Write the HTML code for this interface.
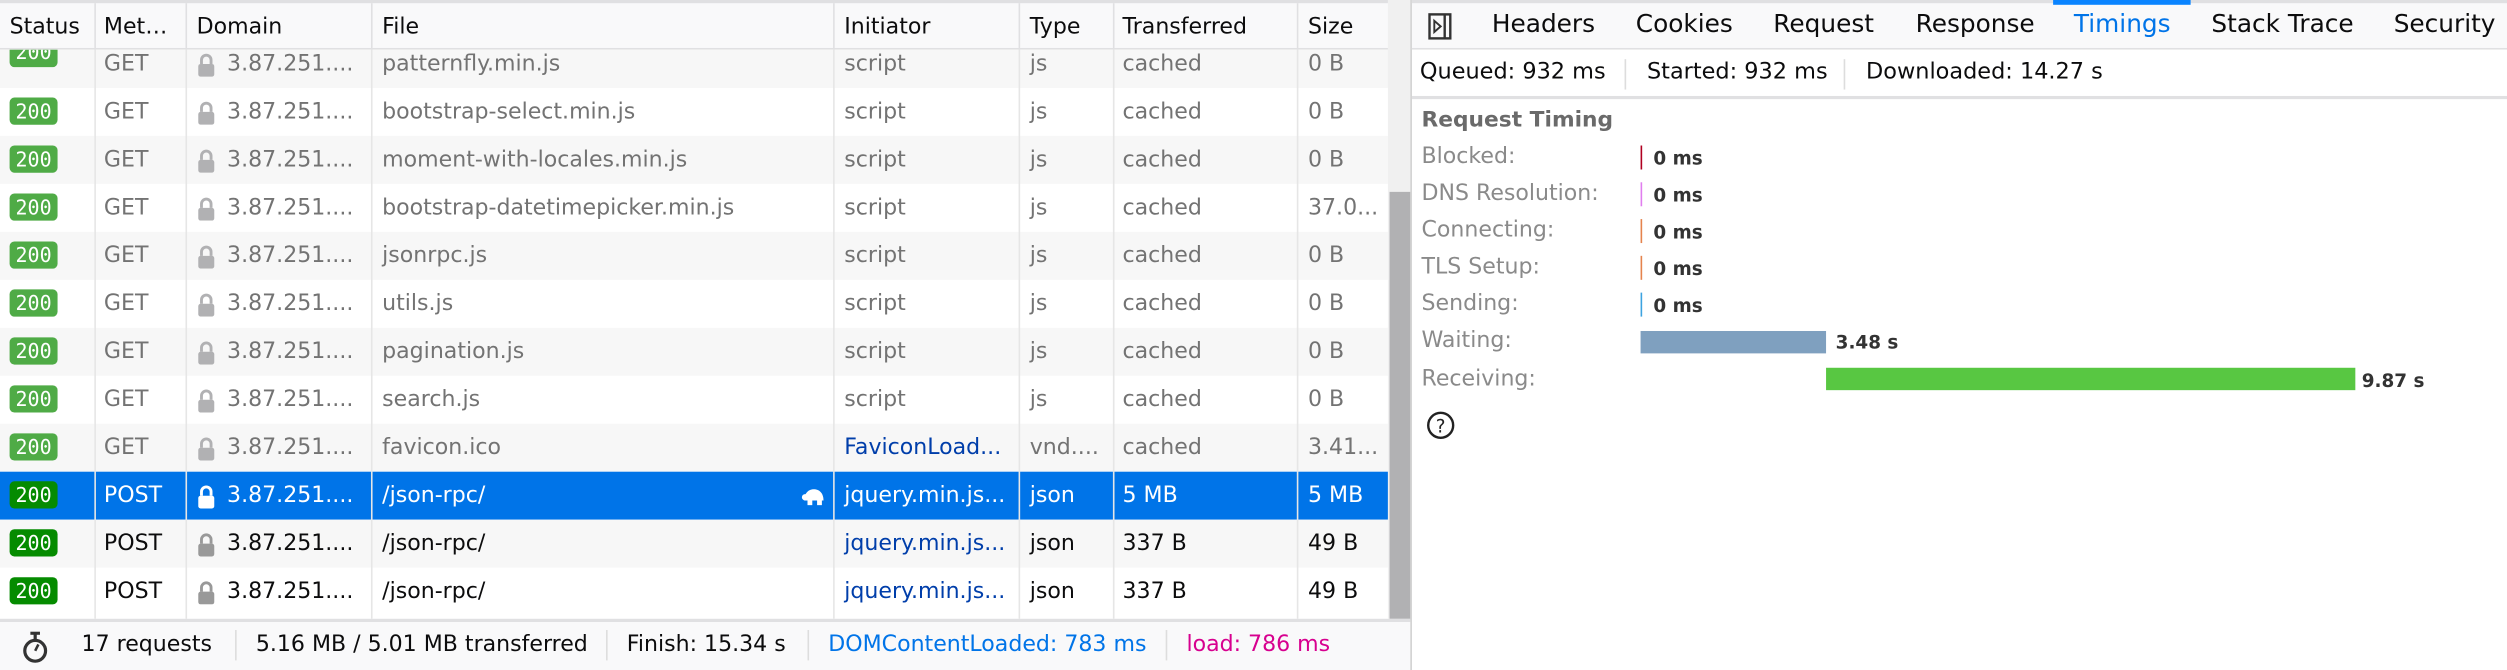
<!DOCTYPE html>
<html><head><meta charset="utf-8"><style>
html,body{margin:0;padding:0;background:#fff;overflow:hidden;width:2507px;height:670px}
#w{position:absolute;left:0;top:0;width:1568px;height:419px;transform:scale(1.599);transform-origin:0 0;font-family:"DejaVu Sans","Liberation Sans",sans-serif;font-size:11px;color:#0c0c0d}
.left{position:absolute;left:0;top:0;width:882px;height:419px;background:#fff}
.hdr{position:absolute;left:0;top:0;width:868px;height:31px;background:#f9f9fa;border-top:2px solid #e0e0e2;box-sizing:border-box;border-bottom:1px solid #e0e0e2}
.col{position:absolute;top:0;height:100%;border-left:1px solid #e0e0e2}
.ht{position:absolute;top:7px;font-size:13.8px;color:#0c0c0d;white-space:nowrap}
.row{position:absolute;left:0;width:868px;height:30px;font-size:13.8px;color:#737373}
.row.g{background:#f7f7f7}
.row.sel{background:#0074e8;color:#fff}
.row span{position:absolute;top:7px;white-space:nowrap}
.b{position:absolute;left:6px;top:6px;width:30px;height:17px;border-radius:3px;background:#4fab46;color:#fff;font-family:"DejaVu Sans Mono",monospace;font-size:12.5px;line-height:17px;text-align:center}
.b.d{background:#058b00}
.lk{position:absolute;left:123px;top:8px;width:12px;height:15px}
.vl{position:absolute;top:31px;height:356px;border-left:1px solid #e6e6e6}
.sb{position:absolute;left:868px;top:0;width:14px;height:387px;background:#f0f0f0}
.th{position:absolute;left:869px;top:120px;width:13px;height:268px;background:#b1b1b3}
.ft{position:absolute;left:0;top:387px;width:882px;height:32px;background:#f9f9fa;border-top:2px solid #e0e0e2;box-sizing:border-box;font-size:13.8px}
.ft span{position:absolute;top:6px;white-space:nowrap}
.fs{position:absolute;top:5px;height:19px;border-left:1px solid #ddd}
.right{position:absolute;left:882px;top:0;width:686px;height:419px;border-left:1px solid #d0d0d0}
.tabs{position:absolute;left:0;top:0;width:686px;height:31px;background:#f9f9fa;border-top:2px solid #e0e0e2;border-bottom:1px solid #e0e0e2;box-sizing:border-box}
.tab{position:absolute;top:4px;font-size:15.5px;color:#0c0c0d;white-space:nowrap}
.sum{position:absolute;left:0;top:31px;width:686px;height:31px;border-bottom:2px solid #e0e0e2;box-sizing:border-box;font-size:14px}
.sum span{position:absolute;top:6px;white-space:nowrap}
.lab{position:absolute;left:6px;font-size:13.8px;color:#8a8a8a;white-space:nowrap}
.val{position:absolute;font-size:11.5px;font-weight:bold;color:#333;white-space:nowrap}
.tk{position:absolute;left:143px;width:1px;height:15px}
</style></head><body><div id="w">
<div class="left">
<div class="row g" style="top:25px"><div class="b" style="top:6px">200</div></div>
<div class="hdr">
<div class="ht" style="left:6px">Status</div><div class="ht" style="left:65px">Met…</div><div class="ht" style="left:123px">Domain</div><div class="ht" style="left:239px">File</div><div class="ht" style="left:528px">Initiator</div><div class="ht" style="left:644px">Type</div><div class="ht" style="left:702px">Transferred</div><div class="ht" style="left:818px">Size</div>
<div class="col" style="left:59px"></div><div class="col" style="left:116px"></div><div class="col" style="left:232px"></div><div class="col" style="left:521px"></div><div class="col" style="left:637px"></div><div class="col" style="left:696px"></div><div class="col" style="left:811px"></div>
</div>
<div class="row g" style="top:31px;height:24px;overflow:hidden"><span style="left:65px;top:1px">GET</span><span style="left:142px;top:1px">3.87.251....</span><span style="left:239px;top:1px">patternfly.min.js</span><span style="left:528px;top:1px">script</span><span style="left:644px;top:1px">js</span><span style="left:702px;top:1px">cached</span><span style="left:818px;top:1px">0 B</span><svg class="lk" style="top:2px" viewBox="0 0 12 15"><path d="M3 7V4.5a3 3 0 0 1 6 0V7" fill="none" stroke="#b1b1b3" stroke-width="1.8"/><rect x="1" y="7" width="10" height="8" rx="1.5" fill="#b1b1b3"/></svg><div class="b" style="top:0;height:11px;line-height:4px;overflow:hidden;border-radius:0 0 3px 3px">200</div></div>

<div id="rows"></div>
<div class="vl" style="left:59px"></div><div class="vl" style="left:116px"></div><div class="vl" style="left:232px"></div><div class="vl" style="left:521px"></div><div class="vl" style="left:637px"></div><div class="vl" style="left:696px"></div><div class="vl" style="left:811px"></div>
<div class="sb"></div><div class="th"></div>
<div class="ft">
<svg style="position:absolute;left:13px;top:6px" width="18" height="20" viewBox="0 0 18 20"><rect x="6" y="0" width="6" height="2" fill="#333"/><rect x="8" y="1" width="2" height="4" fill="#333"/><circle cx="9" cy="12" r="6.5" fill="none" stroke="#333" stroke-width="2"/><path d="M9 12L11 8" stroke="#333" stroke-width="1.6"/></svg>
<span style="left:51px">17 requests</span><div class="fs" style="left:147px"></div>
<span style="left:160px">5.16 MB / 5.01 MB transferred</span><div class="fs" style="left:379px"></div>
<span style="left:392px">Finish: 15.34 s</span><div class="fs" style="left:505px"></div>
<span style="left:518px;color:#0074e8">DOMContentLoaded: 783 ms</span><div class="fs" style="left:729px"></div>
<span style="left:742px;color:#d7008f">load: 786 ms</span>
</div>
</div>
<div class="right">
<div class="tabs">
<svg style="position:absolute;left:10px;top:6px" width="15" height="17" viewBox="0 0 15 17"><rect x="1" y="1" width="13" height="15" fill="none" stroke="#333" stroke-width="1.5"/><line x1="10.5" y1="1" x2="10.5" y2="16" stroke="#333" stroke-width="1.5"/><path d="M4 5l4 3.5-4 3.5z" fill="none" stroke="#333" stroke-width="1.2"/></svg>
<div class="tab" style="left:50px">Headers</div><div class="tab" style="left:140px">Cookies</div><div class="tab" style="left:226px">Request</div><div class="tab" style="left:315px">Response</div><div class="tab" style="left:414px;color:#0074e8">Timings</div><div style="position:absolute;left:401px;top:-2px;width:86px;height:3px;background:#0a84ff"></div><div class="tab" style="left:500px">Stack Trace</div><div class="tab" style="left:614px">Security</div>
</div>
<div class="sum"><span style="left:5px">Queued: 932 ms</span><div class="fs" style="left:133px;top:6px"></div><span style="left:147px">Started: 932 ms</span><div class="fs" style="left:270px;top:6px"></div><span style="left:284px">Downloaded: 14.27 s</span></div>
<div style="position:absolute;left:6px;top:67px;font-size:13.6px;font-weight:bold;color:#6a6a6a">Request Timing</div>
<div class="lab" style="top:90px">Blocked:</div><div class="tk" style="top:91px;background:#b00020"></div><div class="val" style="left:151px;top:92px">0 ms</div>
<div class="lab" style="top:113px">DNS Resolution:</div><div class="tk" style="top:114px;background:#e07eef"></div><div class="val" style="left:151px;top:115px">0 ms</div>
<div class="lab" style="top:136px">Connecting:</div><div class="tk" style="top:137px;background:#e5834d"></div><div class="val" style="left:151px;top:138px">0 ms</div>
<div class="lab" style="top:159px">TLS Setup:</div><div class="tk" style="top:160px;background:#e5834d"></div><div class="val" style="left:151px;top:161px">0 ms</div>
<div class="lab" style="top:182px">Sending:</div><div class="tk" style="top:183px;background:#3da3e0"></div><div class="val" style="left:151px;top:184px">0 ms</div>
<div class="lab" style="top:205px">Waiting:</div><div style="position:absolute;left:143px;top:207px;width:116px;height:14px;background:#7fa0bf"></div><div class="val" style="left:265px;top:207px">3.48 s</div>
<div class="lab" style="top:229px">Receiving:</div><div style="position:absolute;left:259px;top:230px;width:331px;height:14px;background:#58c742"></div><div class="val" style="left:594px;top:231px">9.87 s</div>
<svg style="position:absolute;left:9px;top:257px" width="18" height="18" viewBox="0 0 18 18"><circle cx="9" cy="9" r="7.8" fill="none" stroke="#222" stroke-width="1.5"/><text x="9" y="13.5" font-size="11.5" text-anchor="middle" font-family="DejaVu Sans" fill="#222">?</text></svg>
</div>
</div>
<script>
var d=[
["GET","bootstrap-select.min.js","script","js","cached","0 B"],
["GET","moment-with-locales.min.js","script","js","cached","0 B"],
["GET","bootstrap-datetimepicker.min.js","script","js","cached","37.0..."],
["GET","jsonrpc.js","script","js","cached","0 B"],
["GET","utils.js","script","js","cached","0 B"],
["GET","pagination.js","script","js","cached","0 B"],
["GET","search.js","script","js","cached","0 B"],
["GET","favicon.ico","FaviconLoad...","vnd....","cached","3.41..."],
["POST","/json-rpc/","jquery.min.js...","json","5 MB","5 MB"],
["POST","/json-rpc/","jquery.min.js...","json","337 B","49 B"],
["POST","/json-rpc/","jquery.min.js...","json","337 B","49 B"]];
var h="";
d.forEach(function(r,i){
var top=55+i*30,sel=i==8,post=i>=8,cls="row"+(i%2==1?" g":"")+(sel?" sel":"");
var tc=sel?"#fff":(post?"#0c0c0d":"#737373");
var ic=sel?"#fff":(post?"#003eaa":(i==7?"#003eaa":tc));
var lc=sel?"#fff":(post?"#999":"#b1b1b3");
h+='<div class="'+cls+'" style="top:'+top+'px;color:'+tc+'"><div class="b'+(post?' d':'')+'">200</div>'+
'<span style="left:65px">'+r[0]+'</span>'+
'<svg class="lk" viewBox="0 0 12 15"><path d="M3 7V4.5a3 3 0 0 1 6 0V7" fill="none" stroke="'+lc+'" stroke-width="1.8"/><rect x="1" y="7" width="10" height="8" rx="1.5" fill="'+lc+'"/></svg>'+
'<span style="left:142px">3.87.251....</span><span style="left:239px">'+r[1]+'</span>'+
'<span style="left:528px;color:'+ic+'">'+r[2]+'</span><span style="left:644px">'+r[3]+'</span><span style="left:702px">'+r[4]+'</span><span style="left:818px">'+r[5]+'</span>'+
(sel?'<svg style="position:absolute;left:501px;top:10px" width="16" height="11" viewBox="0 0 16 11"><path d="M2 8C2 3 5 1 8 1s6 2 6 7z" fill="#fff"/><circle cx="2.5" cy="6" r="2" fill="#fff"/><rect x="4" y="8" width="3" height="3" fill="#fff"/><rect x="10" y="8" width="3" height="3" fill="#fff"/></svg>':'')+
'</div>';});
document.getElementById("rows").outerHTML=h;
</script>
</body></html>
